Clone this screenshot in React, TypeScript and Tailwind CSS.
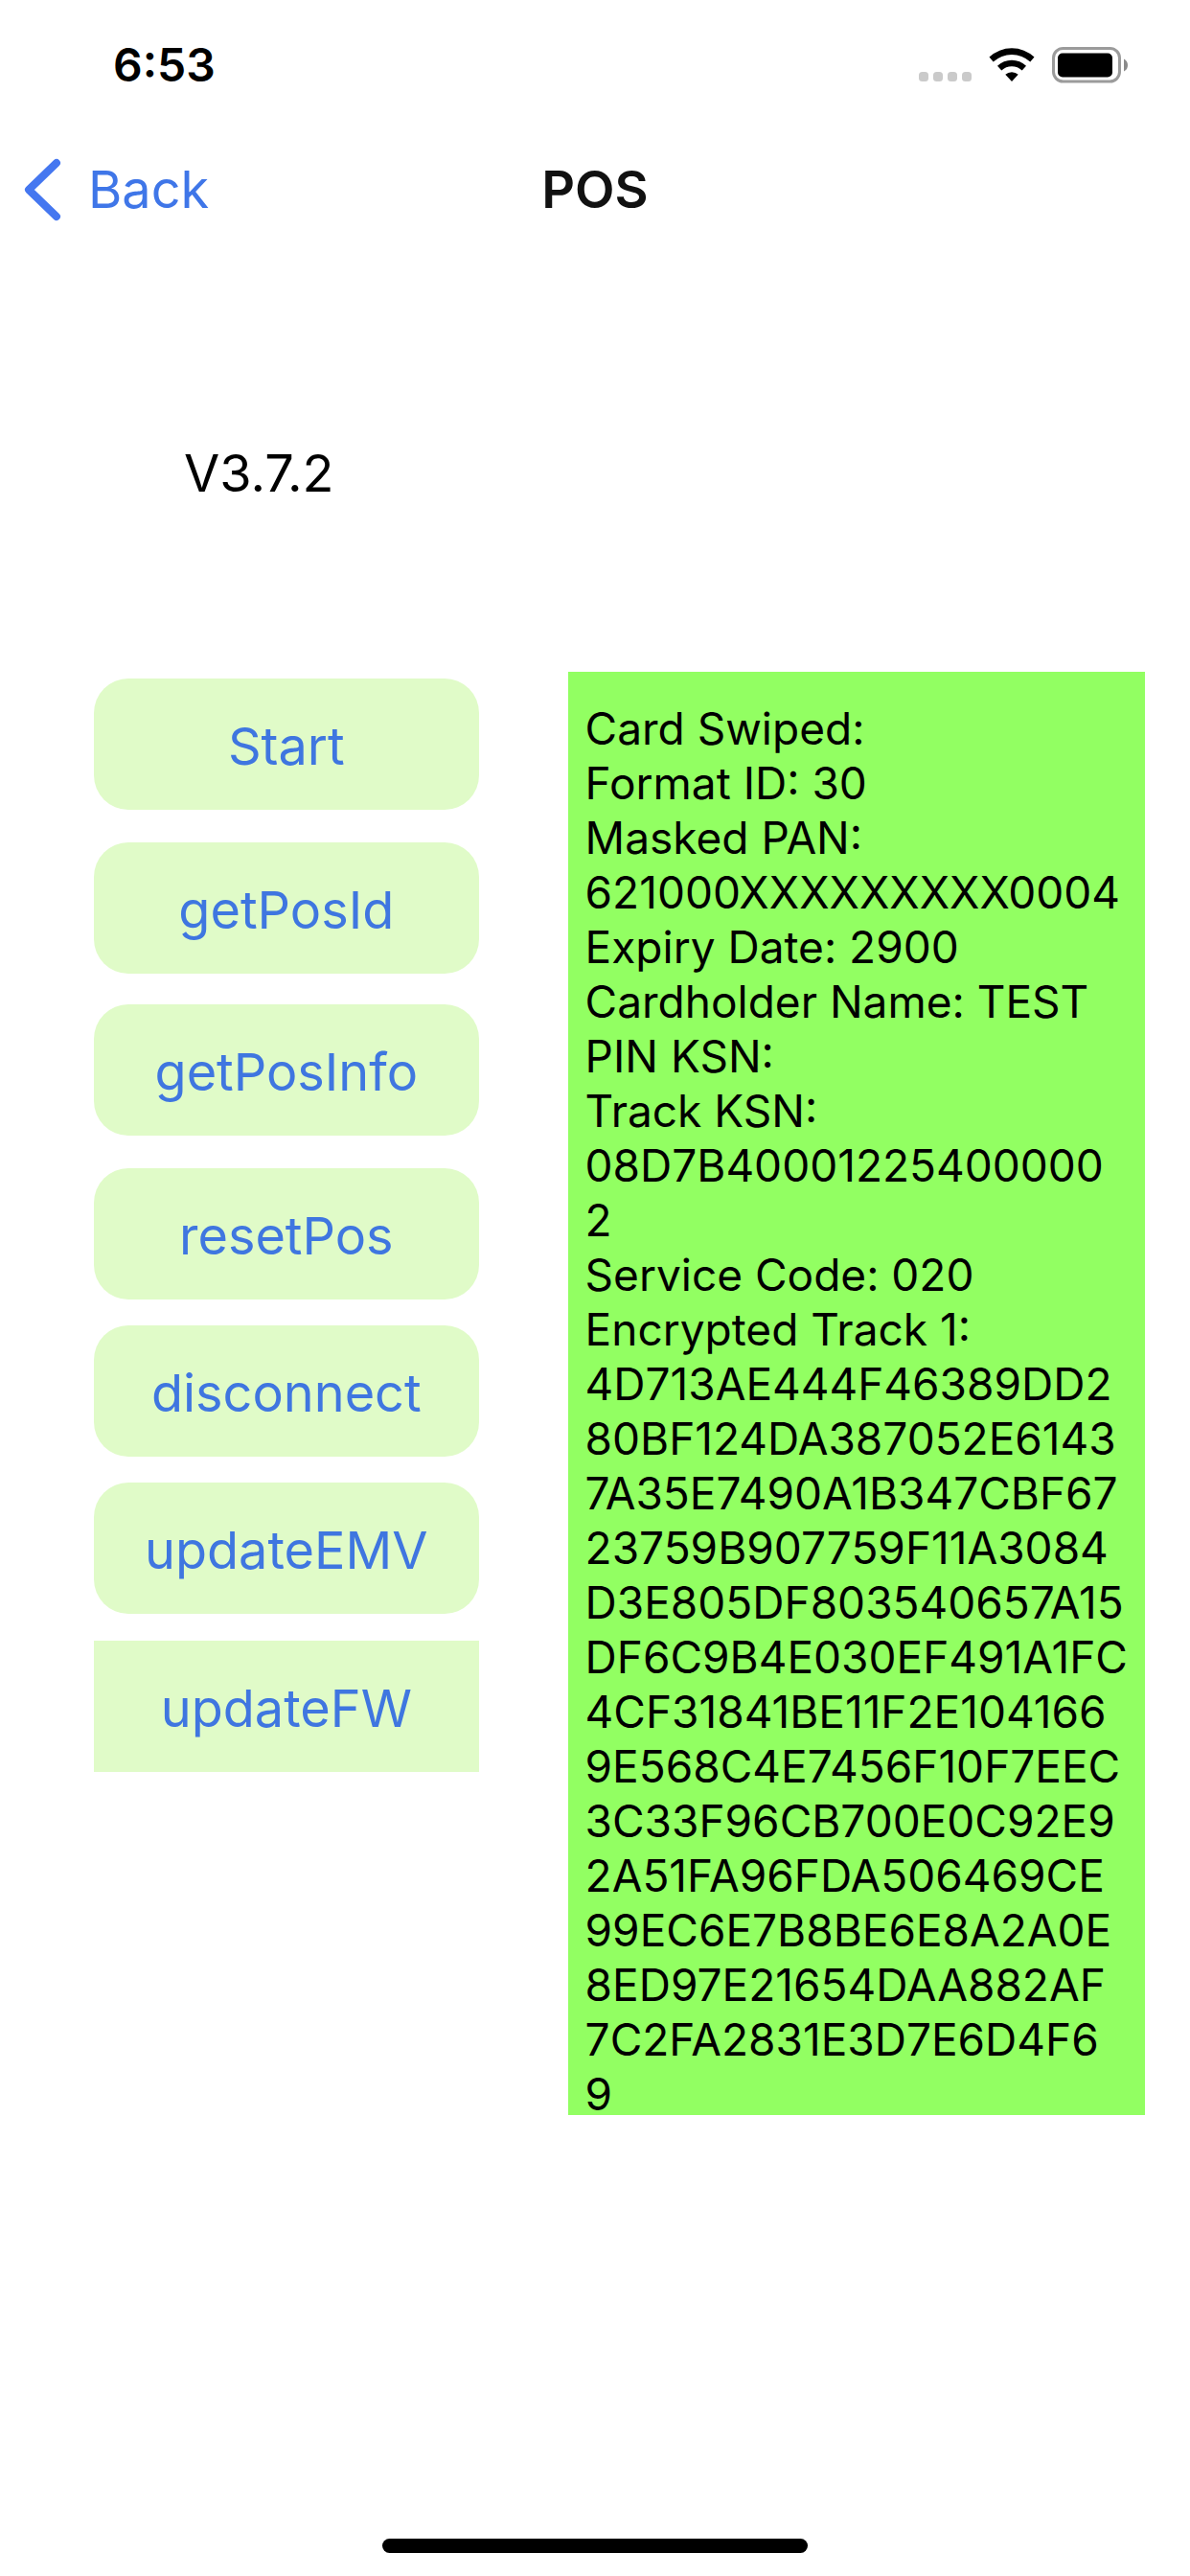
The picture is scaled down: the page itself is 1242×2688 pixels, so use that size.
const actions = [
  { label: "Start", className: "rounded-[36px]" },
  { label: "getPosId", className: "mt-[34px] rounded-[36px]" },
  { label: "getPosInfo", className: "mt-8 rounded-[36px]" },
  { label: "resetPos", className: "mt-[34px] rounded-[36px]" },
  { label: "disconnect", className: "mt-[27px] rounded-[36px]" },
  { label: "updateEMV", className: "mt-[27px] rounded-[36px]" },
  { label: "updateFW", className: "mt-7" },
];

// wrapped the way the terminal result view breaks it
const log = `Card Swiped:
Format ID: 30
Masked PAN:
621000XXXXXXXXX0004
Expiry Date: 2900
Cardholder Name: TEST
PIN KSN:
Track KSN:
08D7B40001225400000
2
Service Code: 020
Encrypted Track 1:
4D713AE444F46389DD2
80BF124DA387052E6143
7A35E7490A1B347CBF67
23759B907759F11A3084
D3E805DF803540657A15
DF6C9B4E030EF491A1FC
4CF31841BE11F2E104166
9E568C4E7456F10F7EEC
3C33F96CB700E0C92E9
2A51FA96FDA506469CE
99EC6E7B8BE6E8A2A0E
8ED97E21654DAA882AF
7C2FA2831E3D7E6D4F6
9`;

function StatusIcons() {
  return (
    <div className="flex items-center">
      <svg width="55" height="38" viewBox="0 0 55 38" fill="#cacaca" aria-hidden="true">
        <rect x="0" y="26" width="10" height="10" rx="3.5" />
        <rect x="15" y="26" width="10" height="10" rx="3.5" />
        <rect x="30" y="26" width="10" height="10" rx="3.5" />
        <rect x="45" y="26" width="10" height="10" rx="3.5" />
      </svg>
      <svg className="ml-[18px]" width="48" height="38" viewBox="0 0 48 38" aria-label="Wi-Fi">
        <path d="M0.500 10.600A34.500 34.500 0 0 1 47.500 10.600L43.300 15.500A28.500 28.500 0 0 0 4.700 15.500Z" />
        <path d="M9 19.800A21.500 21.500 0 0 1 39 19.800L34.700 24.600A15.500 15.500 0 0 0 13.300 24.600Z" />
        <path d="M17.300 28.800A10 10 0 0 1 30.700 28.800L24 36Z" />
      </svg>
      <svg className="ml-[18px]" width="80" height="38" viewBox="0 0 80 38" aria-label="Battery">
        <rect x="1.500" y="1.500" width="69" height="34.500" rx="10" fill="none" stroke="#9b9b9b" strokeWidth="3" />
        <rect x="6" y="6.500" width="57" height="25" rx="5" />
        <path d="M75 12.500Q79 14.500 79 19T75 25.500Z" fill="#8a8a8a" />
      </svg>
    </div>
  );
}

export default function App() {
  return (
    <div className="flex flex-col min-h-screen bg-white text-black font-[Inter,sans-serif]">
      <div className="flex items-center justify-between h-[136px] pl-[118px] pr-16">
        <span className="text-[48px] font-semibold leading-[56px]">6:53</span>
        <StatusIcons />
      </div>

      <header className="grid items-center grid-cols-3 h-[124px] px-6">
        <a href="#back" className="flex items-center text-[54px] leading-[64px] text-[#3f76e8]">
          <svg width="42" height="68" viewBox="0 0 42 68" fill="none" stroke="#4577f0" strokeWidth="8" strokeLinecap="round" strokeLinejoin="round" aria-hidden="true">
            <path d="M35 6L6 34L35 62" />
          </svg>
          <span className="ml-[26px]">Back</span>
        </a>
        <h1 className="text-[54px] font-semibold leading-[64px] text-center text-[#111]">POS</h1>
      </header>

      <main>
        <p className="pt-[202px] pl-48 text-[54px] leading-[64px]">V3.7.2</p>

        <div className="grid grid-cols-[2fr_3fr] items-start gap-x-[93px] mt-[175px] pl-[98px] pr-[47px]">
          <div className="flex flex-col pt-[7px]">
            {actions.map((action) => (
              <button
                key={action.label}
                type="button"
                className={`h-[137px] pt-1 bg-[#e0fbc8] text-[54px] leading-[64px] text-[#3f76e0] ${action.className}`}
              >
                {action.label}
              </button>
            ))}
          </div>
          <pre className="h-[1506px] bg-[#92ff62] pt-[31px] pl-[18px] font-[Inter,sans-serif] text-[46px] leading-[57px]">
            {log}
          </pre>
        </div>
      </main>

      <div className="w-[444px] h-[15px] mx-auto mt-auto mb-6 bg-black rounded-full" />
    </div>
  );
}
